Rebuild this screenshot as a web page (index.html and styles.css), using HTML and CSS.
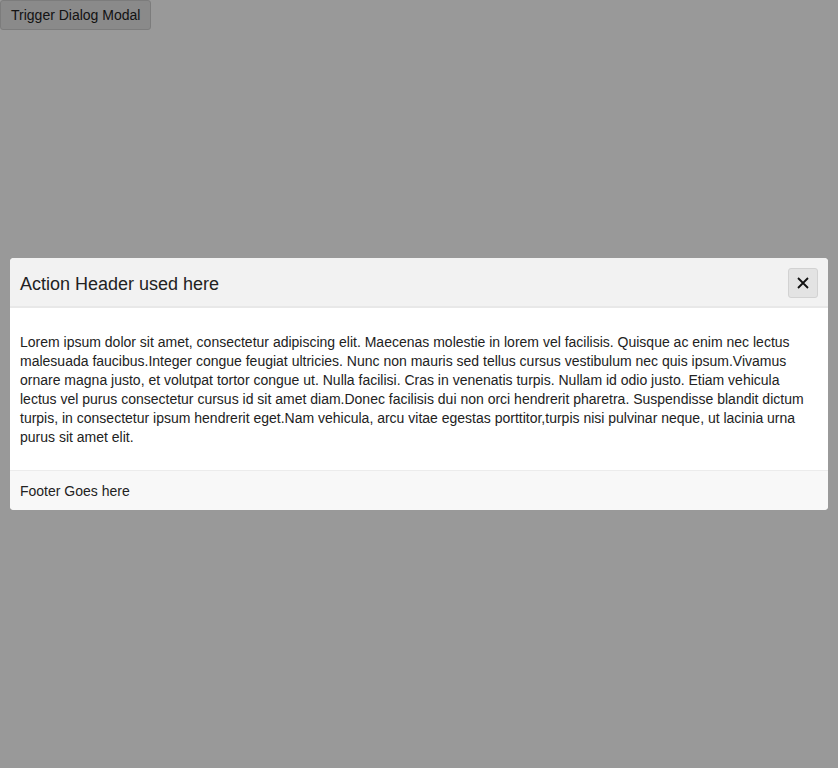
FILE: index.html
```html
<!DOCTYPE html>
<html>
<head>
<meta charset="utf-8">
<link rel="stylesheet" href="styles.css">
</head>
<body>
<button class="trigger">Trigger Dialog Modal</button>
<div class="overlay">
  <div class="modal">
    <div class="modal-header">
      <span class="title">Action Header used here</span>
      <button class="close" aria-label="Close">
        <svg width="14" height="14" viewBox="0 0 14 14"><path d="M2 2 L12 12 M12 2 L2 12" stroke="#111" stroke-width="1.8" fill="none"/></svg>
      </button>
    </div>
    <div class="modal-body">
      Lorem ipsum dolor sit amet, consectetur adipiscing elit. Maecenas molestie in lorem vel facilisis. Quisque ac enim nec lectus malesuada faucibus.Integer congue feugiat ultricies. Nunc non mauris sed tellus cursus vestibulum nec quis ipsum.Vivamus ornare magna justo, et volutpat tortor congue ut. Nulla facilisi. Cras in venenatis turpis. Nullam id odio justo. Etiam vehicula lectus vel purus consectetur cursus id sit amet diam.Donec facilisis dui non orci hendrerit pharetra. Suspendisse blandit dictum turpis, in consectetur ipsum hendrerit eget.Nam vehicula, arcu vitae egestas porttitor,turpis nisi pulvinar neque, ut lacinia urna purus sit amet elit.
    </div>
    <div class="modal-footer">Footer Goes here</div>
  </div>
</div>
</body>
</html>
```
FILE: styles.css
```css
html, body {
  margin: 0;
  padding: 0;
  background: #ffffff;
  font-family: "Liberation Sans", Arial, sans-serif;
}
.trigger {
  margin: 0;
  height: 30px;
  padding: 0 10px;
  font-family: "Liberation Sans", Arial, sans-serif;
  font-size: 14px;
  color: #222;
  background: #e6e6e6;
  border: 1px solid #cfcfcf;
  border-radius: 3px;
}
.overlay {
  position: fixed;
  inset: 0;
  background: rgba(0, 0, 0, 0.4);
  display: flex;
  align-items: center;
  padding: 0 10px;
}
.modal {
  flex: 1;
  background: #fff;
  border-radius: 4px;
  overflow: hidden;
  color: #222;
}
.modal-header {
  height: 48px;
  background: #f2f2f2;
  border-bottom: 2px solid #e8e8e8;
  display: flex;
  align-items: center;
  justify-content: space-between;
  padding: 0 10px;
}
.title {
  font-size: 18px;
  padding-top: 4px;
}
.close {
  width: 30px;
  height: 30px;
  padding: 0;
  display: flex;
  align-items: center;
  justify-content: center;
  background: #e3e3e3;
  border: 1px solid #d2d2d2;
  border-radius: 3px;
  margin-top: 1px;
}
.modal-body {
  padding: 25px 10px 23px;
  font-size: 14px;
  line-height: 19px;
}
.modal-footer {
  border-top: 1px solid #ececec;
  background: #f8f8f8;
  padding: 11px 10px 9px;
  font-size: 14px;
  line-height: 19px;
}
```
